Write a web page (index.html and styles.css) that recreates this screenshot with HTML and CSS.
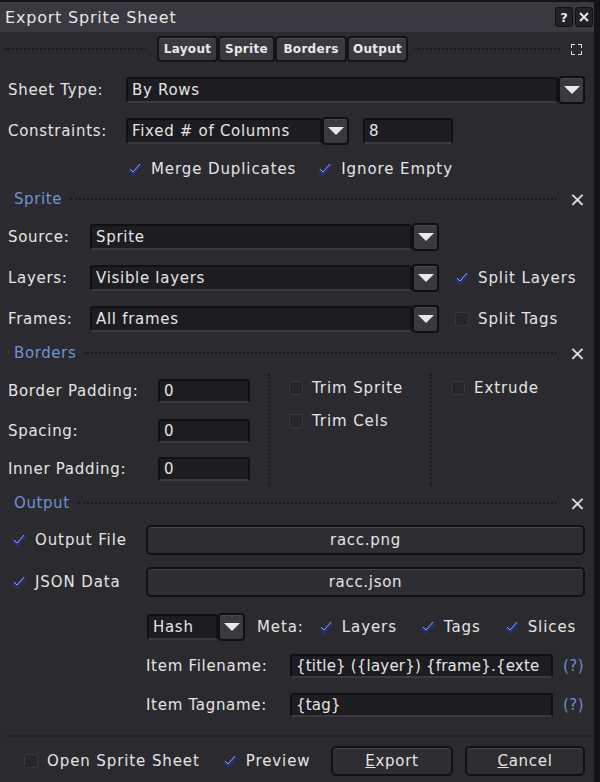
FILE: index.html
```html
<!DOCTYPE html>
<html>
<head>
<meta charset="utf-8">
<link rel="stylesheet" href="styles.css">
</head>
<body>
<div class="win">
  <div class="titlebar">
    <span class="title">Export Sprite Sheet</span>
    <div class="tbtns">
      <span class="tbtn">?</span>
      <span class="tbtn">
        <svg width="12" height="12" viewBox="0 0 12 12"><path d="M2 2 L10 10 M10 2 L2 10" stroke="#e8e8e8" stroke-width="2"/></svg>
      </span>
    </div>
  </div>

  <div class="row r-tabs">
    <div class="dash dash-l"></div>
    <div class="tabs">
      <span class="tab t-layout">Layout</span>
      <span class="tab t-sprite">Sprite</span>
      <span class="tab t-borders">Borders</span>
      <span class="tab t-output">Output</span>
    </div>
    <div class="dash dash-r"></div>
    <svg class="maxicon" width="11" height="11" viewBox="0 0 11 11"><path d="M0 4 V0 H4 M7 0 H11 V4 M11 7 V11 H7 M4 11 H0 V7" stroke="#e0e0e0" stroke-width="2" fill="none"/></svg>
  </div>

  <div class="row r-sheet">
    <span class="lbl w118">Sheet Type:</span>
    <div class="field grow">By Rows</div>
    <span class="ddbtn"><i class="tri"></i></span>
  </div>

  <div class="row r-cons">
    <span class="lbl w118">Constraints:</span>
    <div class="field w196">Fixed # of Columns</div>
    <span class="ddbtn"><i class="tri"></i></span>
    <div class="field w90 ml14">8</div>
  </div>

  <div class="row r-checks">
    <span class="chk on"><svg width="16" height="14" viewBox="0 0 16 14"><path d="M2 8 L6 12 L14 3" stroke="#26307a" stroke-width="3" fill="none"/><path d="M3 7 L6 10 L13 2" stroke="#9aa6e0" stroke-width="1" fill="none"/></svg></span>
    <span class="ctext">Merge Duplicates</span>
    <span class="chk on ml21"><svg width="16" height="14" viewBox="0 0 16 14"><path d="M2 8 L6 12 L14 3" stroke="#26307a" stroke-width="3" fill="none"/><path d="M3 7 L6 10 L13 2" stroke="#9aa6e0" stroke-width="1" fill="none"/></svg></span>
    <span class="ctext">Ignore Empty</span>
  </div>

  <div class="row sechead r-sprite-h">
    <span class="stitle">Sprite</span>
    <div class="dash grow"></div>
    <span class="close">×</span>
  </div>

  <div class="row r-source">
    <span class="lbl w82">Source:</span>
    <div class="field w322">Sprite</div>
    <span class="ddbtn"><i class="tri"></i></span>
  </div>

  <div class="row r-layers">
    <span class="lbl w82">Layers:</span>
    <div class="field w322">Visible layers</div>
    <span class="ddbtn"><i class="tri"></i></span>
    <span class="chk on ml15"><svg width="16" height="14" viewBox="0 0 16 14"><path d="M2 8 L6 12 L14 3" stroke="#26307a" stroke-width="3" fill="none"/><path d="M3 7 L6 10 L13 2" stroke="#9aa6e0" stroke-width="1" fill="none"/></svg></span>
    <span class="ctext">Split Layers</span>
  </div>

  <div class="row r-frames">
    <span class="lbl w82">Frames:</span>
    <div class="field w322">All frames</div>
    <span class="ddbtn"><i class="tri"></i></span>
    <span class="chk off ml15"></span>
    <span class="ctext">Split Tags</span>
  </div>

  <div class="row sechead r-borders-h">
    <span class="stitle">Borders</span>
    <div class="dash grow"></div>
    <span class="close">×</span>
  </div>

  <div class="borders">
    <div class="bcol1">
      <div class="brow b1"><span class="lbl w150">Border Padding:</span><div class="field w92">0</div></div>
      <div class="brow b2"><span class="lbl w150">Spacing:</span><div class="field w92">0</div></div>
      <div class="brow b3"><span class="lbl w150">Inner Padding:</span><div class="field w92">0</div></div>
    </div>
    <div class="vsep"></div>
    <div class="bcol2">
      <div class="crow c1"><span class="chk off"></span><span class="ctext">Trim Sprite</span></div>
      <div class="crow c2"><span class="chk off"></span><span class="ctext">Trim Cels</span></div>
    </div>
    <div class="vsep"></div>
    <div class="bcol3">
      <div class="crow c1"><span class="chk off"></span><span class="ctext">Extrude</span></div>
    </div>
  </div>

  <div class="row sechead r-output-h">
    <span class="stitle">Output</span>
    <div class="dash grow"></div>
    <span class="close">×</span>
  </div>

  <div class="row r-ofile">
    <div class="olbl">
      <span class="chk on"><svg width="16" height="14" viewBox="0 0 16 14"><path d="M2 8 L6 12 L14 3" stroke="#26307a" stroke-width="3" fill="none"/><path d="M3 7 L6 10 L13 2" stroke="#9aa6e0" stroke-width="1" fill="none"/></svg></span>
      <span class="ctext">Output File</span>
    </div>
    <div class="btnfield grow">racc.png</div>
  </div>

  <div class="row r-json">
    <div class="olbl">
      <span class="chk on"><svg width="16" height="14" viewBox="0 0 16 14"><path d="M2 8 L6 12 L14 3" stroke="#26307a" stroke-width="3" fill="none"/><path d="M3 7 L6 10 L13 2" stroke="#9aa6e0" stroke-width="1" fill="none"/></svg></span>
      <span class="ctext">JSON Data</span>
    </div>
    <div class="btnfield grow">racc.json</div>
  </div>

  <div class="row r-hash">
    <div class="field w71">Hash</div>
    <span class="ddbtn"><i class="tri"></i></span>
    <span class="meta">Meta:</span>
    <span class="chk on"><svg width="16" height="14" viewBox="0 0 16 14"><path d="M2 8 L6 12 L14 3" stroke="#26307a" stroke-width="3" fill="none"/><path d="M3 7 L6 10 L13 2" stroke="#9aa6e0" stroke-width="1" fill="none"/></svg></span>
    <span class="ctext">Layers</span>
    <span class="chk on ml23"><svg width="16" height="14" viewBox="0 0 16 14"><path d="M2 8 L6 12 L14 3" stroke="#26307a" stroke-width="3" fill="none"/><path d="M3 7 L6 10 L13 2" stroke="#9aa6e0" stroke-width="1" fill="none"/></svg></span>
    <span class="ctext">Tags</span>
    <span class="chk on ml23"><svg width="16" height="14" viewBox="0 0 16 14"><path d="M2 8 L6 12 L14 3" stroke="#26307a" stroke-width="3" fill="none"/><path d="M3 7 L6 10 L13 2" stroke="#9aa6e0" stroke-width="1" fill="none"/></svg></span>
    <span class="ctext">Slices</span>
  </div>

  <div class="row r-ifile">
    <span class="lbl w144">Item Filename:</span>
    <div class="field w263">{title} ({layer}) {frame}.{exte</div>
    <span class="help">(?)</span>
  </div>

  <div class="row r-itag">
    <span class="lbl w144">Item Tagname:</span>
    <div class="field w263">{tag}</div>
    <span class="help">(?)</span>
  </div>

  <div class="hsep"></div>

  <div class="row r-bottom">
    <span class="chk off"></span>
    <span class="ctext">Open Sprite Sheet</span>
    <span class="chk on ml22"><svg width="16" height="14" viewBox="0 0 16 14"><path d="M2 8 L6 12 L14 3" stroke="#26307a" stroke-width="3" fill="none"/><path d="M3 7 L6 10 L13 2" stroke="#9aa6e0" stroke-width="1" fill="none"/></svg></span>
    <span class="ctext">Preview</span>
    <span class="btn b-export"><u>E</u>xport</span>
    <span class="btn b-cancel"><u>C</u>ancel</span>
  </div>
</div>
</body>
</html>
```

FILE: styles.css
```css
* { box-sizing: border-box; }
body {
  margin: 0;
  background: #2b2a2f;
  font-family: "DejaVu Sans", sans-serif;
  font-size: 15px;
  color: #e4e4e4;
}
.win {
  width: 600px;
  height: 782px;
  background: #2b2a2f;
  border-top: 2px solid #141316;
  border-right: 6px solid #141316;
  display: flex;
  flex-direction: column;
  overflow: hidden;
}
.titlebar {
  height: 30px;
  flex: none;
  background: #3a3940;
  display: flex;
  align-items: center;
  padding-left: 5px;
  padding-right: 1px;
}
.title { font-size: 16px; letter-spacing: 0.8px; color: #e6e6e6; }
.tbtns { margin-left: auto; display: flex; gap: 2px; }
.tbtn {
  width: 18px; height: 20px;
  background: #232227;
  border: 1px solid #101012;
  border-radius: 3px;
  display: flex; align-items: center; justify-content: center;
  font-size: 13px; font-weight: bold; color: #e8e8e8;
}

.row { display: flex; align-items: center; height: 30px; flex: none; }
.grow { flex: 1; }

.dash { height: 0; border-top: 2px dotted #1c1b20; }
.r-tabs { margin-top: 2px; padding-left: 5px; }
.dash-l { width: 140px; }
.dash-r { width: 145px; margin-left: 7px; }
.tabs { display: flex; margin-left: 12px; }
.tab {
  height: 26px;
  display: flex; align-items: center; justify-content: center;
  background: #3a3940;
  border: 2px solid #141316;
  border-radius: 4px;
  font-size: 12px; font-weight: bold; color: #e8e8e8;
  letter-spacing: 0.3px;
  box-shadow: inset 0 1px 0 #4a4950;
}
.t-layout { width: 61px; }
.t-sprite { width: 57px; }
.t-borders { width: 72px; }
.t-output { width: 61px; }
.maxicon { margin-left: 11px; }

.lbl { padding-left: 8px; white-space: nowrap; letter-spacing: 0.7px; }
.w118 { width: 126px; }
.w82 { width: 90px; }
.w150 { width: 158px; }
.w144 { width: 144px; padding-left: 0; }

.field {
  height: 26px;
  background: #1d1c21;
  border: 2px solid #111013;
  border-bottom-color: #3b3a40;
  border-radius: 3px;
  display: flex; align-items: center;
  padding-left: 4px;
  letter-spacing: 0.7px;
  white-space: nowrap;
  overflow: hidden;
}
.w196 { width: 196px; }
.w322 { width: 322px; }
.w90 { width: 90px; }
.w92 { width: 92px; height: 24px; }
.w71 { width: 71px; }
.w263 { width: 263px; height: 24px; letter-spacing: 0.2px; }
.ml14 { margin-left: 14px; }
.ml15 { margin-left: 15px; }
.ml21 { margin-left: 21px; }
.ml22 { margin-left: 22px; }
.ml23 { margin-left: 23px; }

.ddbtn {
  width: 27px; height: 28px;
  background: #3a3940;
  border: 2px solid #101012;
  border-radius: 4px;
  display: flex; align-items: center; justify-content: center;
  box-shadow: inset 0 1px 0 #4a4950;
  flex: none;
}
.tri {
  width: 0; height: 0;
  border-left: 8px solid transparent;
  border-right: 8px solid transparent;
  border-top: 8px solid #e8e8e8;
}

.r-sheet { margin-top: 11px; padding-right: 9px; }
.r-cons { margin-top: 11px; }
.r-checks { margin-top: 8px; padding-left: 127px; }

.chk { width: 16px; height: 14px; display: inline-flex; align-items: center; justify-content: center; flex: none; }
.chk.off::before {
  content: ""; width: 12px; height: 12px;
  border: 1px solid #37363c;
  background: #27262b;
  border-radius: 2px;
}
.ctext { margin-left: 8px; letter-spacing: 0.9px; white-space: nowrap; }

.sechead { padding-left: 14px; padding-right: 13px; height: 30px; }
.stitle { color: #7391d0; letter-spacing: 0.6px; }
.sechead .dash { margin-left: 8px; margin-right: 12px; }
.close { font-size: 20px; color: #e0e0e0; width: 12px; text-align: center; }
.r-sprite-h { margin-top: 0; }
.r-source { margin-top: 8px; }
.r-layers { margin-top: 11px; }
.r-frames { margin-top: 11px; }
.r-borders-h { margin-top: 4px; }

.borders { display: flex; margin-top: 2px; height: 117px; flex: none; }
.bcol1 { width: 268px; padding-top: 6px; }
.brow { display: flex; align-items: center; height: 30px; }
.b2 { margin-top: 10px; }
.b3 { margin-top: 8px; }
.vsep { width: 0; border-left: 2px dotted #1c1b20; height: 112px; margin-top: 4px; }
.bcol2 { width: 160px; padding-left: 18px; padding-top: 3px; }
.bcol3 { padding-left: 18px; padding-top: 3px; }
.crow { display: flex; align-items: center; height: 30px; }
.crow.c2 { margin-top: 3px; }

.r-output-h { margin-top: 1px; }
.r-ofile { margin-top: 7px; padding-left: 11px; padding-right: 9px; }
.r-json { margin-top: 12px; padding-left: 11px; padding-right: 9px; }
.olbl { width: 135px; display: flex; align-items: center; }
.btnfield {
  height: 30px;
  background: #2e2d32;
  border: 2px solid #111013;
  border-radius: 5px;
  box-shadow: inset 0 1px 0 #444349;
  display: flex; align-items: center; justify-content: center;
  letter-spacing: 0.7px;
}
.r-hash { margin-top: 15px; padding-left: 147px; }
.meta { margin-left: 12px; margin-right: 14px; letter-spacing: 0.9px; }

.r-ifile { margin-top: 9px; padding-left: 146px; }
.r-itag { margin-top: 9px; padding-left: 146px; }
.help { color: #6f8ed0; margin-left: 10px; letter-spacing: 0.5px; }

.hsep { height: 0; border-top: 2px dotted #1c1b20; margin: 15px 4px 0 5px; flex: none; }

.r-bottom { margin-top: 9px; padding-left: 23px; padding-right: 9px; }
.btn {
  height: 30px;
  display: flex; align-items: center; justify-content: center;
  background: #2e2d32;
  border: 2px solid #111013;
  border-radius: 5px;
  box-shadow: inset 0 1px 0 #444349;
  letter-spacing: 0.7px;
}
.b-export { width: 122px; margin-left: auto; }
.b-cancel { width: 120px; margin-left: 12px; }
```
